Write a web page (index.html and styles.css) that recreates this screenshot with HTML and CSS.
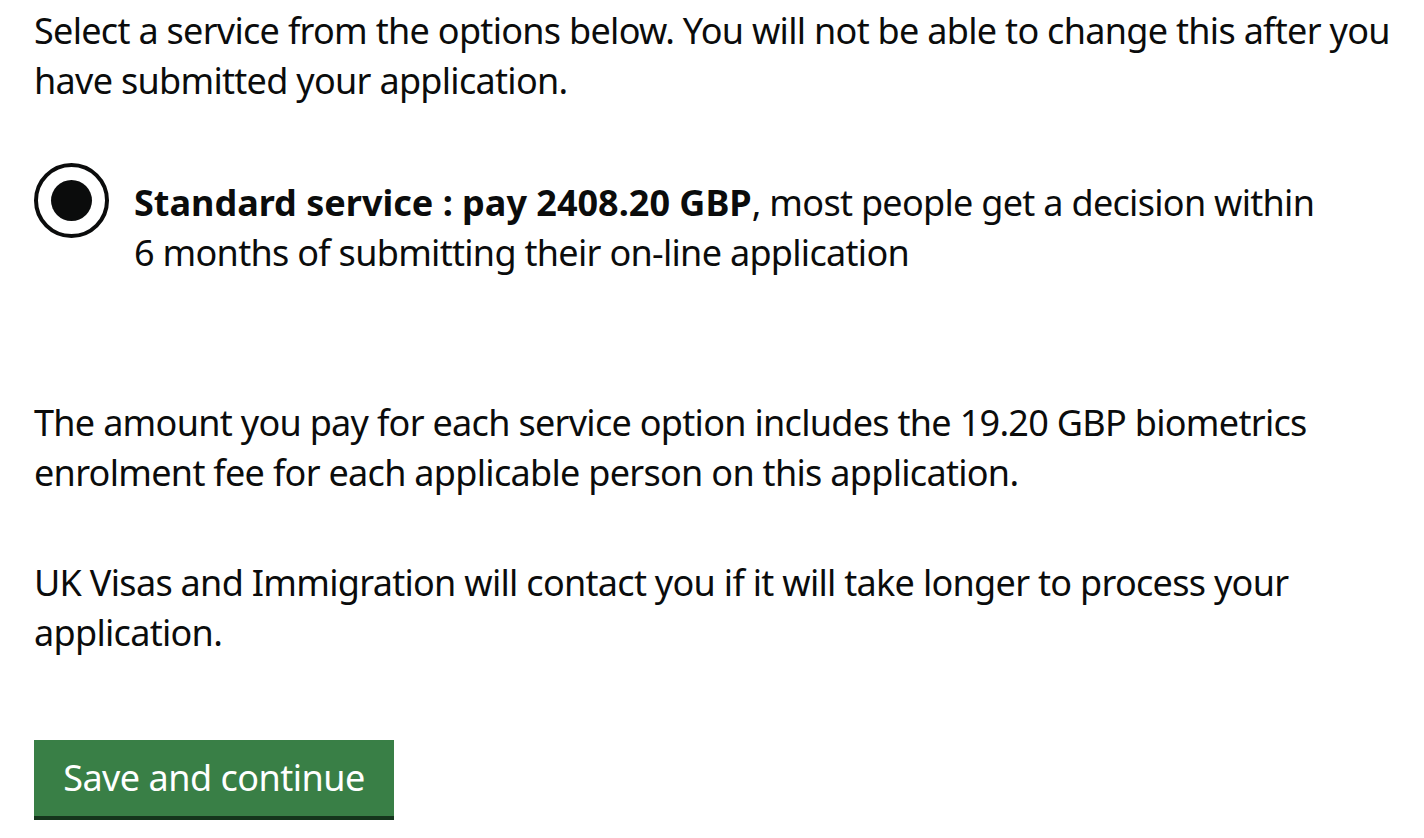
FILE: index.html
```html
<!DOCTYPE html>
<html lang="en">
<head>
<meta charset="utf-8">
<title>Select a service</title>
<link rel="stylesheet" href="styles.css">
</head>
<body>
<main class="page">
  <p class="body-text intro">Select a service from the options below. You will not be able to change this after you have submitted your application.</p>

  <div class="radio-item">
    <span class="radio-circle" aria-hidden="true"><span class="radio-dot"></span></span>
    <label class="radio-label"><strong class="bold">Standard service : pay 2408.20 GBP</strong>, most people get a decision within 6 months of submitting their on-line application</label>
  </div>

  <p class="body-text fee">The amount you pay for each service option includes the 19.20 GBP biometrics enrolment fee for each applicable person on this application.</p>

  <p class="body-text contact">UK Visas and Immigration will contact you if it will take longer to process your application.</p>

  <button class="button" type="button">Save and continue</button>
</main>
</body>
</html>
```
FILE: styles.css
```css
* { box-sizing: border-box; }

html, body {
  margin: 0;
  padding: 0;
  background: #ffffff;
}

body {
  font-family: "Noto Sans", "Open Sans", sans-serif;
  color: #0b0c0c;
}

.page {
  width: 1410px;
  padding: 6px 0 0 34px;
  display: flex;
  flex-direction: column;
  align-items: flex-start;
}

.body-text {
  margin: 0;
  font-size: 36px;
  line-height: 50px;
  letter-spacing: -0.7px;
  max-width: 1372px;
}

.radio-item {
  margin-top: 57px;
  display: flex;
  align-items: flex-start;
}

.radio-circle {
  flex: none;
  width: 75px;
  height: 75px;
  border: 4px solid #0b0c0c;
  border-radius: 50%;
  display: flex;
  align-items: center;
  justify-content: center;
}

.radio-dot {
  width: 41px;
  height: 41px;
  border-radius: 50%;
  background: #0b0c0c;
}

.radio-label {
  margin-left: 25px;
  padding-top: 15px;
  width: 1200px;
  font-size: 36px;
  line-height: 50px;
  letter-spacing: -0.7px;
}

.bold {
  font-weight: 700;
  letter-spacing: 0;
}

.fee {
  margin-top: 120px;
}

.contact {
  margin-top: 60px;
}

.button {
  margin-top: 82px;
  width: 360px;
  height: 80px;
  padding: 0 0 4px;
  border: 0;
  border-radius: 0;
  background: #397f46;
  box-shadow: inset 0 -4px 0 #15351c;
  color: #ffffff;
  font-family: "Noto Sans", "Open Sans", sans-serif;
  font-size: 36px;
  line-height: 76px;
  letter-spacing: -0.5px;
  text-align: center;
  cursor: pointer;
}
```
